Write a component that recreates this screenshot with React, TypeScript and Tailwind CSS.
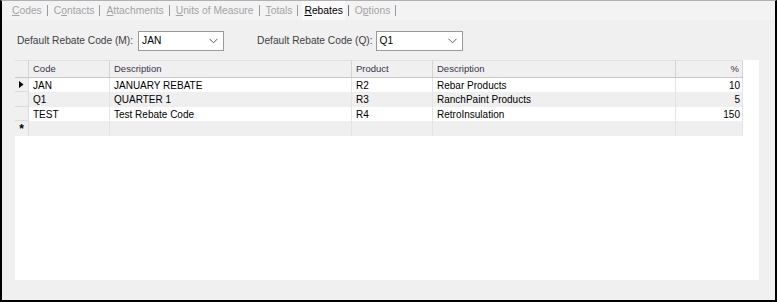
import React from "react";

const tabs = [
  { pre: "", u: "C", post: "odes" },
  { pre: "C", u: "o", post: "ntacts" },
  { pre: "", u: "A", post: "ttachments" },
  { pre: "", u: "U", post: "nits of Measure" },
  { pre: "", u: "T", post: "otals" },
  { pre: "", u: "R", post: "ebates", active: true },
  { pre: "O", u: "p", post: "tions" },
];

const cols = [
  { label: "Code", w: "w-[81px]" },
  { label: "Description", w: "w-[242px]" },
  { label: "Product", w: "w-[81px]" },
  { label: "Description", w: "w-[243px]" },
  { label: "%", w: "w-[67px]", right: true },
];

const rows = [
  ["JAN", "JANUARY REBATE", "R2", "Rebar Products", "10"],
  ["Q1", "QUARTER 1", "R3", "RanchPaint Products", "5"],
  ["TEST", "Test Rebate Code", "R4", "RetroInsulation", "150"],
];

function Chevron() {
  return (
    <svg width="9" height="6" viewBox="0 0 9 6" className="shrink-0">
      <path d="M0.5 0.8 L4.5 4.8 L8.5 0.8" fill="none" stroke="#5a5a5a" strokeWidth="1" />
    </svg>
  );
}

function Combo({ value, w }: { value: string; w: string }) {
  return (
    <div className={`${w} h-[20px] bg-white border border-[#9a9a9a] flex items-center justify-between pl-[3px] pr-[5px] text-black`}>
      <span>{value}</span>
      <Chevron />
    </div>
  );
}

export default function App() {
  return (
    <div
      className="w-[777px] h-[302px] bg-[#f0f0f0] border-l-2 border-r-2 border-b-2 border-t border-l-black border-r-black border-b-black border-t-[#b0b0b0] flex flex-col text-[10px] overflow-hidden"
      style={{ fontFamily: '"Liberation Sans", Arial, sans-serif' }}
    >
      {/* tab strip */}
      <div className="h-[19px] bg-[#f3f3f3] flex items-stretch pl-[8px] text-[10.3px]">
        {tabs.map((t, i) => (
          <div key={i} className="flex items-center">
            <div
              className={`h-full flex items-center px-[2px] ${
                t.active ? "bg-[#fafafa] text-black" : "text-[#a3a3a3]"
              }`}
            >
              <span>
                {t.pre}
                <span className="underline underline-offset-1">{t.u}</span>
                {t.post}
              </span>
            </div>
            <div className={`w-px h-[11px] ml-[3px] mr-[4px] ${t.active ? "bg-[#707070]" : "bg-[#9a9a9a]"}`} />
          </div>
        ))}
      </div>

      {/* combos */}
      <div className="mt-[11px] flex items-center pl-[15px] text-[#404040] text-[10.2px]">
        <span>Default Rebate Code (M):</span>
        <div className="ml-[5px]">
          <Combo value="JAN" w="w-[86px]" />
        </div>
        <span className="ml-[33px]">Default Rebate Code (Q):</span>
        <div className="ml-[3px]">
          <Combo value="Q1" w="w-[87px]" />
        </div>
      </div>

      {/* grid */}
      <div className="mt-[9px] ml-[13px] mr-[16px] h-[220px] bg-white flex flex-col">
        {/* header */}
        <div className="flex h-[18px] bg-[#f0f0f0] border-t border-[#e0e0e0] border-b border-b-[#c8c8c8] w-[728px] text-[9.5px] text-[#3a3048]">
          <div className="w-[14px] border-r border-[#d4d4d4]" />
          {cols.map((c, i) => (
            <div
              key={i}
              className={`${c.w} border-r border-[#d4d4d4] flex items-center ${
                c.right ? "justify-end pr-[3px]" : "pl-[4px]"
              }`}
            >
              {c.label}
            </div>
          ))}
        </div>
        {rows.map((r, ri) => (
          <div
            key={ri}
            className={`flex w-[728px] ${ri === 1 ? "h-[15px] bg-[#efefef]" : "h-[14px] bg-white"} text-black text-[10px]`}
          >
            <div className="w-[14px] bg-[#f0f0f0] border-r border-b border-[#dcdcdc] flex items-center justify-center">
              {ri === 0 && (
                <svg width="5" height="7" viewBox="0 0 5 7">
                  <path d="M0 0 L4.5 3.5 L0 7 Z" fill="#000" />
                </svg>
              )}
            </div>
            {cols.map((c, ci) => (
              <div
                key={ci}
                className={`${c.w} border-r border-[#e4e4e4] flex items-center ${
                  c.right ? "justify-end pr-[2px]" : "pl-[4px]"
                }`}
              >
                {r[ci]}
              </div>
            ))}
          </div>
        ))}
        <div className="flex w-[728px] h-[15px] bg-[#efefef]">
          <div className="w-[14px] bg-[#f0f0f0] border-r border-[#dcdcdc] flex items-start justify-center pt-[2px] text-[12px] font-bold leading-none text-black">
            *
          </div>
          {cols.map((c, ci) => (
            <div key={ci} className={`${c.w} border-r border-[#e4e4e4]`} />
          ))}
        </div>
      </div>
    </div>
  );
}
